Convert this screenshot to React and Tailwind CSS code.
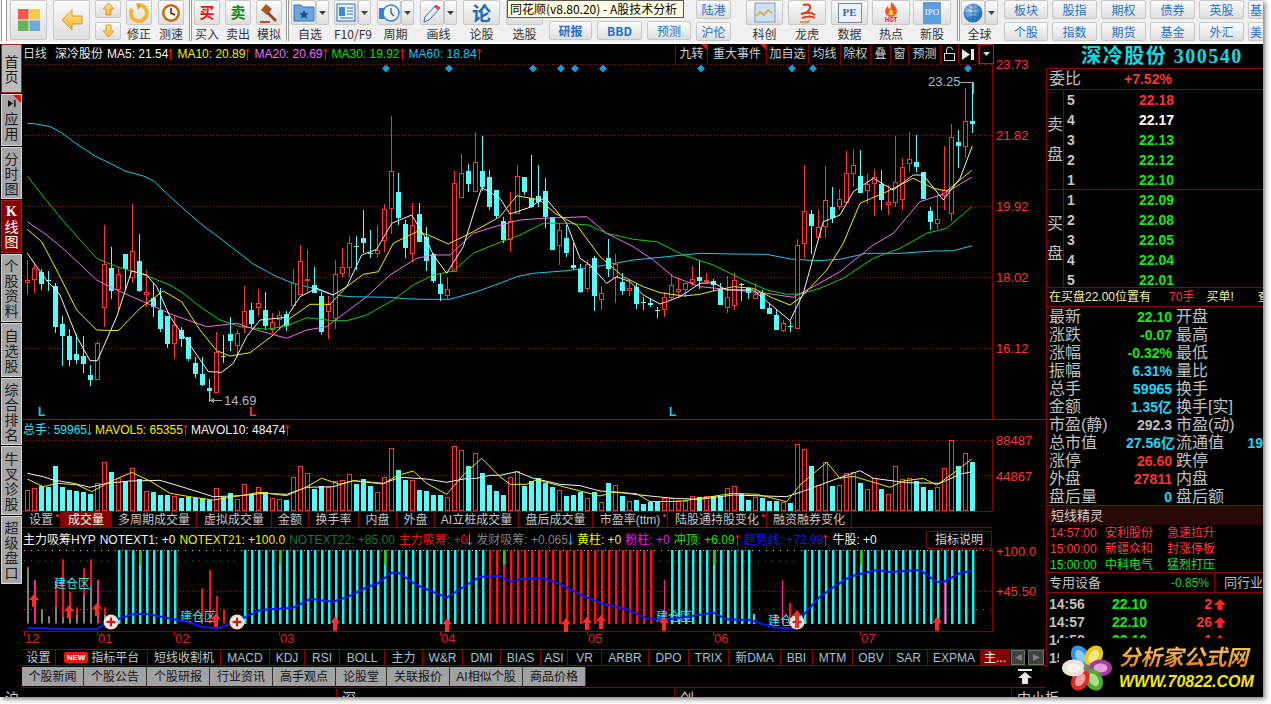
import React from "react";

const X = (i) => Math.round(27.33 + 7 * i);
const pts = (a, ox, oy) => {
  let s = [];
  for (let k = 0; k < a.length; k += 2) s.push(`${(a[k] / 3 + ox).toFixed(1)},${(a[k + 1] / 3 + oy).toFixed(1)}`);
  return s.join(" ");
};
const two = (a, b, oy) => pts(a, 0, oy) + " " + pts(b, 500, oy);

const CANDLES = `r450 555 510 515;r455 548 475 508;c478 540 487 522;c483 542 510 512;c518 670 528 652;c618 768 642 678;c658 768 678 750;c672 762 732 750;c678 788 738 762;c765 828 795 810;r692 808 700 806;r345 652 462 590;c410 568 474 542;r475 600 492 538;c432 540 432 478;r282 520 424 500;c372 545 453 543;r480 590 546 552;c520 620 563 590;c535 665 600 657;c618 715 618 702;r618 748 646 700;c650 710 660 686;c680 752 682 748;c740 805 760 792;c742 828 792 825;c808 875 835 842;r665 845 725 845;c675 758 738 741;c622 722 672 692;r660 740 670 704;r528 668 604 648;c580 650 600 642;r538 618 580 590;c545 660 600 648;r610 668 636 656;r603 660 614 628;c604 662 613 648;r478 584 518 584;r406 552 452 552;r418 545 507 510;c470 550 525 550;c545 675 558 665;r558 688 583 604;r450 658 492 624;r415 500 472 490;r378 500 400 470;c378 480 408 411;c300 430 384 398;c360 445 430 433;r345 445 420 430;r282 425 298 390;r18 372 184 295;c190 345 246 325;c330 445 342 414;r280 455 346 428;c280 395 312 396;c352 482 382 452;c430 518 432 512;c490 572 522 552;r500 568 538 556;r182 485 220 484;r132 265 190 262;c162 245 184 222;r66 245 157 242;c78 242 184 232;c180 300 202 290;c240 325 240 318;c322 400 334 390;r245 425 332 388;r165 310 198 310;c200 255 202 245;c135 295 265 292;c165 290 259 275;c205 355 243 322;c320 420 322 420;r340 465 360 405;c346 440 385 430;c400 480 465 474;c462 548 478 545;r450 545 463 533;c438 602 444 557;r528 600 550 566;c388 500 445 476;r432 578 462 500;c488 555 515 542;r510 558 535 541;c520 596 530 582;c560 600 576 579;c565 592 580 584;c590 624 600 603;r545 620 562 598;r492 570 526 560;r505 565 538 542;r518 560 520 536;r468 528 508 515;c450 537 502 514;r490 520 511 514;c508 542 512 526;c518 585 535 584;r497 608 562 590;r490 600 510 584;c520 572 522 526;c530 568 534 548;r518 568 553 563;c540 597 550 596;c580 611 595 611;c598 660 616 660;r630 665 640 660;c632 665 648 652;r388 654 406 654;r165 444 302 398;c300 432 312 348;r300 384 350 382;r168 384 270 348;c230 340 292 324;r238 300 268 288;r124 276 190 276;r118 230 166 188;c120 250 198 248;r192 282 222 240;r178 318 200 220;c180 300 222 270;r225 315 276 282;r78 290 216 276;r145 300 172 266;r66 185 148 158;c75 186 156 172;c186 268 186 266;c292 360 304 336;r255 358 328 338;r108 300 240 255;r42 334 82 308;c60 175 96 108;r-66 145 34 108;c-84 69 34 42`
  .split(";")
  .map((s) => [s[0], ...s.slice(1).split(" ").map(Number)]);

const VOLS = `225 220 213 215 153 216 225 228 231 237 205 142 171 190 198 160 192 229 231 240 240 244 249 245 250 250 254 220 245 234 252 208 238 216 232 250 253 255 187 154 175 222 213 215 198 196 178 207 192 213 232 187 100 165 195 196 225 228 240 240 247 94 106 153 115 174 210 228 240 187 169 213 198 190 203 216 226 243 240 232 250 232 262 204 211 243 259 255 267 261 258 250 250 256 258 244 246 244 243 244 220 214 238 255 246 249 258 258 262 264 88 103 153 210 142 213 211 175 170 204 223 190 222 238 154 193 190 198 216 225 217 160 76 153 115 141`
  .split(" ")
  .map(Number);

const MA60 = two([82,40,110,42,150,50,185,68,220,95,285,138,330,160,375,183,430,198,460,212,510,260,600,340,680,400,760,462,830,500,880,520,940,535,1000,555,1050,560,1170,562,1210,566,1270,568,1350,568,1430,545,1500,520],[50,500,100,490,200,482,300,468,400,450,500,440,600,430,700,432,800,433,870,447,950,452,1020,448,1100,430,1200,430,1300,423,1360,422,1417,407],110);
const MA30 = two([82,198,130,260,200,345,290,445,350,470,420,490,510,525,550,550,600,590,660,630,720,650,800,658,860,648,920,623,1000,632,1040,632,1100,615,1180,570,1240,525,1300,495,1360,483,1420,430,1500,397],[60,375,130,340,200,340,265,345,320,370,400,388,470,395,550,435,640,465,720,505,800,540,860,553,900,552,960,535,1030,505,1120,445,1200,415,1280,370,1340,355,1415,290],110);
const MA20 = two([82,335,140,375,200,425,290,510,350,540,430,575,520,615,620,650,710,640,770,660,860,685,920,660,980,650,1040,605,1100,560,1170,495,1250,445,1300,435,1350,435,1420,370,1500,345],[60,330,130,325,260,320,320,370,400,410,460,450,520,500,600,530,700,540,800,550,880,562,940,530,1020,485,1120,405,1180,370,1260,275,1330,252,1415,202],110);
const MA10 = two([82,358,125,395,175,490,230,600,290,660,355,662,420,595,490,543,545,575,600,660,650,722,690,738,750,728,820,675,870,625,930,583,990,583,1040,530,1090,493,1135,485,1180,400,1250,365,1285,375,1345,402,1420,365,1500,320],[50,257,120,270,165,310,230,345,300,440,370,500,430,530,480,548,550,558,600,553,640,543,700,530,760,535,820,565,870,585,905,560,980,480,1030,400,1080,280,1160,245,1240,205,1300,235,1340,243,1415,181],110);
const MA5 = two([82,430,135,505,180,555,230,680,270,752,292,752,350,620,395,483,440,495,470,530,510,620,570,705,625,785,665,787,700,760,740,680,780,630,860,622,900,560,950,535,1000,555,1040,530,1085,435,1130,418,1175,340,1235,315,1280,390,1300,435,1340,490,1390,410,1445,232,1500,265],[30,312,90,292,135,262,200,340,240,445,270,465,320,520,350,500,390,515,430,555,480,582,540,560,600,520,640,518,680,540,760,540,820,590,870,632,910,550,970,335,1020,315,1060,245,1120,205,1180,240,1240,195,1270,195,1330,270,1380,205,1417,108],110);
const MAV = two([82,175,130,185,160,195,220,205,270,217,320,205,390,198,480,196,560,220,640,245,720,242,790,235,860,238,920,217,1000,215,1060,197,1150,205,1200,187,1280,192,1340,202,1390,192,1430,190,1470,181,1500,181],[50,170,100,190,180,208,240,212,300,228,360,232,420,240,520,250,600,253,700,240,860,245,920,225,1000,195,1080,167,1120,190,1220,203,1320,205,1380,178,1415,170],415);
const MAV5 = two([82,192,130,215,170,205,230,209,275,230,330,200,395,172,450,198,510,235,580,247,640,255,720,242,780,232,860,242,920,215,965,190,1020,208,1060,197,1150,207,1190,182,1240,168,1280,205,1340,238,1390,180,1445,130,1500,185],[30,208,80,208,110,194,190,215,300,243,340,232,410,236,450,260,540,259,700,235,770,238,860,260,900,210,980,142,1020,190,1060,184,1100,196,1170,217,1210,198,1270,190,1310,210,1360,175,1415,132],415);
const BLUE = two([82,355,120,355,200,358,290,358,310,345,360,325,400,313,440,311,490,322,560,335,610,352,660,353,700,338,740,320,780,300,880,293,930,267,1000,275,1040,262,1100,232,1130,222,1175,188,1195,188,1250,225,1340,263,1400,225,1440,200,1500,198],[30,215,60,208,130,205,180,222,250,258,310,282,380,298,440,325,490,330,560,320,640,308,680,328,750,330,820,352,880,356,910,315,960,260,1000,232,1050,200,1130,180,1170,186,1260,180,1310,215,1330,216,1380,190,1417,182],510);

const RED = "#ff3232";
const CY = "#54fcfc";
const SANS = "font-['Liberation_Sans','Noto_Sans_CJK_SC',sans-serif]";

function Candles() {
  return CANDLES.map(([k, h, l, t, b], i) => {
    const x = X(i);
    const col = k === "r" ? RED : CY;
    const yh = Math.round(110 + h / 3), yl = Math.round(110 + l / 3), yt = Math.round(110 + t / 3), yb = Math.round(110 + b / 3);
    return (
      <g key={i}>
        <rect x={x} y={yh} width="1" height={yl - yh} fill={col} />
        {k === "r" ? (
          <rect x={x - 1.5} y={yt + 0.5} width="4" height={Math.max(yb - yt, 1)} fill="#000" stroke={col} strokeWidth="1" />
        ) : (
          <rect x={x - 2} y={yt} width="5" height={Math.max(yb - yt, 1)} fill={col} />
        )}
      </g>
    );
  });
}

function MainChart() {
  const dia = [386, 449, 533, 561, 575, 603, 701, 792, 813, 968];
  const grid = [64.5, 135.5, 206.5, 277.5, 348.5];
  const labels = [["23.73", 69], ["21.82", 140], ["19.92", 211], ["18.02", 282], ["16.12", 353]];
  return (
    <svg width="1024" height="355" viewBox="22 64 1024 355" className="block overflow-visible">
      {grid.map((y) => (
        <line key={y} x1="24" x2="992" y1={y} y2={y} stroke="#a01010" strokeDasharray="1 2" />
      ))}
      <line x1="992.5" x2="992.5" y1="64" y2="419" stroke="#8b0000" />
      {labels.map(([t, y]) => (
        <text key={t} x="996" y={y} fill={RED} fontSize="13" fontFamily="Liberation Sans">{t}</text>
      ))}
      {dia.map((x) => (
        <path key={x} d={`M${x} 64.5l4 4-4 4-4-4z`} fill="#1a9ad0" />
      ))}
      <polyline points={MA60} fill="none" stroke="#20c8e8" />
      <Candles />
      <polyline points={MA30} fill="none" stroke="#10d010" />
      <polyline points={MA20} fill="none" stroke="#f070f0" />
      <polyline points={MA10} fill="none" stroke="#f0f000" />
      <polyline points={MA5} fill="none" stroke="#f4f4f4" />
      <path d="M210 391v9.5h12M210.500 400.500l3-2v4z" stroke="#a8a8a8" fill="none" />
      <text x="224" y="405" fill="#b0b8c0" fontSize="13" fontFamily="Liberation Sans">14.69</text>
      <path d="M960 82.500h13M973.500 82v12" stroke="#a8a8a8" fill="none" />
      <text x="928" y="86" fill="#b0b8c0" fontSize="13" fontFamily="Liberation Sans">23.25</text>
      <text x="38" y="416" fill="#18c8f0" fontSize="12" fontWeight="bold" fontFamily="Liberation Sans">L</text>
      <text x="249" y="416" fill={RED} fontSize="12" fontWeight="bold" fontFamily="Liberation Sans">L</text>
      <text x="669" y="416" fill="#18c8f0" fontSize="12" fontWeight="bold" fontFamily="Liberation Sans">L</text>
    </svg>
  );
}

function VolChart() {
  return (
    <svg width="1024" height="72" viewBox="22 439 1024 72" className="block overflow-visible">
      {[440.5, 475.5].map((y) => (
        <line key={y} x1="24" x2="992" y1={y} y2={y} stroke="#a01010" strokeDasharray="1 2" />
      ))}
      <line x1="992.5" x2="992.5" y1="439" y2="511" stroke="#8b0000" />
      <text x="996" y="445" fill={RED} fontSize="13" fontFamily="Liberation Sans">88487</text>
      <text x="996" y="481" fill={RED} fontSize="13" fontFamily="Liberation Sans">44867</text>
      {VOLS.map((t, i) => {
        const x = X(i);
        const y = Math.round(415 + t / 3);
        return CANDLES[i][0] === "r" ? (
          <rect key={i} x={x - 1.5} y={y + 0.5} width="4" height={510 - y} fill="#000" stroke={RED} />
        ) : (
          <rect key={i} x={x - 2} y={y} width="5" height={511 - y} fill={CY} />
        );
      })}
      <polyline points={MAV} fill="none" stroke="#f4f4f4" />
      <polyline points={MAV5} fill="none" stroke="#f0f000" />
    </svg>
  );
}

function UpArrow({ x, y1, y2 }) {
  const top = y1, bot = y2;
  return <path d={`M${x} ${top}l5 6h-3v${bot - top - 6}h-4v${-(bot - top - 6)}h-3z`} fill="#ff2a2a" />;
}

function Plus({ x, y }) {
  return (
    <g>
      <circle cx={x} cy={y} r="7.500" fill="#f6dccc" />
      <circle cx={x} cy={y} r="5" fill="#fff" />
      <path d={`M${x - 1.2} ${y - 4.500}h2.400v3.300h3.300v2.400h-3.300v3.300h-2.400v-3.300h-3.300v-2.400h3.300z`} fill="#d01818" />
    </g>
  );
}

function IndChart() {
  const idx = [];
  for (let i = 13; i <= 21; i++) idx.push([i, "c"]);
  for (let i = 31; i <= 65; i++) idx.push([i, "c"]);
  for (let i = 66; i <= 89; i++) idx.push([i, "r"]);
  for (let i = 92; i <= 103; i++) idx.push([i, "c"]);
  for (let i = 111; i <= 135; i++) idx.push([i, "c"]);
  const small = [
    [27, 175, "#808080", 170], [34, 210, "#ff2090", 210], [41, 298, "#808080", 298], [48, 320, "#808080", 318],
    [55, 290, "#808080", 212], [62, 322, "#808080", 148], [69, 322, "#808080", 245], [76, 315, "#808080", 292],
    [83, 255, "#808080", 175], [90, 228, "#808080", 148], [97, 210, "#ff2090", 210], [104, 315, "#808080", 292],
    [201, 330, "#808080", 235], [209, 320, "#ff1010", 180], [216, 330, "#808080", 258], [223, 330, "#ff1010", 298],
  ];
  const months = [["12", 24], ["01", 97], ["02", 174], ["03", 279], ["04", 440], ["05", 587], ["06", 713], ["07", 860]];
  const Y = (z) => 510 + z / 3;
  const arrows = [[34, 252, 290], [69, 285, 325], [97, 278, 318], [216, 310, 350], [335, 320, 362], [447, 325, 366], [566, 325, 366], [587, 320, 360], [601, 315, 357], [664, 320, 362], [937, 320, 362]];
  const zhuz = { fontFamily: "Noto Sans CJK SC", fontSize: 12, fill: "#22e8e8" };
  return (
    <svg width="1024" height="100" viewBox="22 549 1024 100" className="block overflow-visible">
      <line x1="24" x2="992" y1="550.500" y2="550.500" stroke="#f0e000" strokeDasharray="1 6" />
      <line x1="24" x2="992" y1="591.500" y2="591.500" stroke="#a01010" strokeDasharray="1 2" />
      <line x1="24" x2="992" y1="609.500" y2="609.500" stroke="#c04040" strokeDasharray="1 6" />
      <line x1="24" x2="118" y1="561" y2="561" stroke="#109010" strokeDasharray="1 6" />
      <line x1="178" x2="240" y1="561" y2="561" stroke="#109010" strokeDasharray="1 6" />
      <line x1="660" x2="800" y1="561" y2="561" stroke="#109010" strokeDasharray="1 6" />
      <line x1="992.500" x2="992.500" y1="549" y2="632" stroke="#8b0000" />
      <line x1="22" x2="992" y1="631.500" y2="631.500" stroke="#8b0000" />
      {small.map(([x, tz, col, hz], k) => (
        <g key={k}>
          <rect x={x} y={Y(hz)} width="2" height={(340 - hz) / 3} fill={col === "#ff2090" ? col : "#ff1010"} />
          <rect x={x} y={Y(tz)} width="2" height={(340 - tz) / 3} fill={col} />
        </g>
      ))}
      {idx.map(([i, k]) => (
        <rect key={i} x={X(i)} y="550" width="2.500" height="74" fill={k === "c" ? "#18f0f0" : "#ff1010"} />
      ))}
      {[16, 36, 51, 68, 98, 119].map((i) => (
        <rect key={i} x={X(i)} y="550" width="2.500" height="15" fill="#20d020" />
      ))}
      <rect x="753" y="614" width="2" height="10" fill="#18f0f0" />
      <rect x="775" y="614" width="2" height="10" fill="#ff1010" />
      <rect x="782" y="580" width="1" height="44" fill="#ff2090" />
      <rect x="789" y="603" width="2" height="21" fill="#ff1010" />
      <rect x="664" y="580" width="1" height="44" fill="#ff2090" />
      <rect x="944" y="582" width="1" height="42" fill="#ff2090" />
      <rect x="587" y="580" width="1" height="44" fill="#ff2090" />
      <text x="54" y="588" {...zhuz}>建仓区</text>
      <text x="180" y="621" {...zhuz}>建仓区</text>
      <text x="656" y="621" {...zhuz}>建仓区</text>
      <text x="768" y="625" {...zhuz}>建仓区</text>
      <polyline points={BLUE} fill="none" stroke="#0a18f0" strokeWidth="2" />
      {arrows.map(([x, a, b]) => (
        <UpArrow key={x} x={x} y1={Y(a)} y2={Y(b)} />
      ))}
      <Plus x={111} y={622} />
      <Plus x={237} y={622} />
      <Plus x={797} y={622} />
      <UpArrow x={797} y1={610} y2={628} />
      {months.map(([t, x]) => (
        <g key={t}>
          <line x1={x + 0.5} x2={x + 0.5} y1="632" y2="636" stroke="#b01010" />
          <text x={x + 1} y="643" fill="#e02020" fontSize="13" fontFamily="Liberation Sans">{t}</text>
        </g>
      ))}
      <text x="996" y="556" fill={RED} fontSize="13" fontFamily="Liberation Sans">+100.0</text>
      <text x="996" y="596" fill={RED} fontSize="13" fontFamily="Liberation Sans">+45.50</text>
    </svg>
  );
}

/* ---------- toolbar ---------- */
const box = "rounded-[2px] border border-[#c8c8c8] bg-gradient-to-b from-[#fbfbfb] to-[#dedede] flex items-center justify-center";
const lab = "text-[12px] leading-[14px] text-[#333] text-center mt-[2px] whitespace-nowrap";

function Sep({ className }) {
  return <div className={"h-[41px] w-[3px] border-x border-[#9a9a9a] bg-white shrink-0 " + className} />;
}
function Tool({ className, label, children, drop }) {
  return (
    <div className={"shrink-0 " + className}>
      <div className="flex h-[25px]">
        <div className={box + " flex-1 h-full"}>{children}</div>
        {drop && (
          <div className={box + " w-[13px] h-full"}>
            <svg width="7" height="4"><path d="M0 0h7L3.500 4z" fill="#444" /></svg>
          </div>
        )}
      </div>
      <div className={lab}>{label}</div>
    </div>
  );
}
function Tall({ className, children }) {
  return <div className={box + " shrink-0 h-[40px] " + className}>{children}</div>;
}
function Small({ className, children }) {
  return <div className={box + " h-[19px] text-[12px] font-bold text-[#1c70c8] whitespace-nowrap " + className}>{children}</div>;
}
const arrowGrad = (
  <defs>
    <linearGradient id="ag" x1="0" y1="0" x2="0" y2="1">
      <stop offset="0" stopColor="#ffe488" />
      <stop offset="1" stopColor="#f5b330" />
    </linearGradient>
  </defs>
);
function Toolbar() {
  return (
    <div className="relative flex h-[42px] bg-[#f0f0f0] overflow-hidden items-start shrink-0">
      <div className="ml-[1px] w-[6px] h-[41px] border-x border-[#9a9a9a] bg-white shrink-0" />
      <Tall className="ml-[3px] w-[37px]">
        <svg width="24" height="24">
          <rect x="1" y="1" width="10.500" height="10.500" fill="#ef5a50" />
          <rect x="12.500" y="1" width="10.500" height="10.500" fill="#f6cb46" />
          <rect x="1" y="12.500" width="10.500" height="10.500" fill="#69b25c" />
          <rect x="12.500" y="12.500" width="10.500" height="10.500" fill="#6fa8dc" />
        </svg>
      </Tall>
      <Tall className="ml-[6px] w-[37px]">
        <svg width="22" height="22">{arrowGrad}<path d="M1 11L11 1v6h10v8H11v6z" fill="url(#ag)" stroke="#d79a2c" /></svg>
      </Tall>
      <div className="ml-[5px] w-[26px] shrink-0 flex flex-col gap-[4px]">
        <div className={box + " h-[18px]"}><svg width="13" height="14"><path d="M6.500 1L12 7H9v6H4V7H1z" fill="url(#ag)" stroke="#d79a2c" /></svg></div>
        <div className={box + " h-[18px]"}><svg width="13" height="14"><path d="M6.500 13L12 7H9V1H4v6H1z" fill="url(#ag)" stroke="#d79a2c" /></svg></div>
      </div>
      <Tool className="ml-[5px] w-[26px]" label="修正">
        <svg width="20" height="21"><path d="M10 3a8 8 0 1 1-7 4" fill="none" stroke="#f0b838" strokeWidth="4" /><path d="M7 1l6 2-4 5z" fill="#e8a020" /></svg>
      </Tool>
      <Tool className="ml-[6px] w-[26px]" label="测速">
        <svg width="20" height="20"><circle cx="10" cy="10" r="9" fill="#b4701c" /><circle cx="10" cy="10" r="6.500" fill="#fdf8ea" /><path d="M10 5v5l4 2" stroke="#402010" strokeWidth="1.500" fill="none" /></svg>
      </Tool>
      <Sep className="ml-[5px]" />
      <Tool className="ml-[2px] w-[26px]" label="买入"><span className="text-[15px] text-[#f01010] font-bold">买</span></Tool>
      <Tool className="ml-[5px] w-[26px]" label="卖出"><span className="text-[15px] text-[#108a10] font-bold">卖</span></Tool>
      <Tool className="ml-[5px] w-[26px]" label="模拟">
        <svg width="22" height="22"><path d="M3 8l5-6 6 5-5 6z" fill="#a85a24" /><path d="M10 9l9 9-2 2-9-9z" fill="#8a4a1c" /><rect x="2" y="19" width="10" height="2" fill="#c05020" /></svg>
      </Tool>
      <Sep className="ml-[4px]" />
      <Tool className="ml-[2px] w-[38px]" label="自选" drop>
        <svg width="22" height="19"><path d="M1 2h7l2 2h11v14H1z" fill="#6aa6dc" stroke="#3a78b8" /><path d="M11 7l1.500 3 3.300.300-2.500 2.200.800 3.300L11 14l-3.100 1.800.800-3.300L6.200 10.300 9.500 10z" fill="#1c4c90" /></svg>
      </Tool>
      <Tool className="ml-[5px] w-[37px]" label="F10/F9" drop>
        <svg width="20" height="19"><rect x="1" y="1" width="18" height="17" fill="#eaf2fa" stroke="#2c6cb0" /><rect x="3" y="4" width="6" height="9" fill="#3a8ad8" /><path d="M11 5h6M11 8h6M11 11h6M4 15h13" stroke="#2c6cb0" /></svg>
      </Tool>
      <Tool className="ml-[6px] w-[37px]" label="周期" drop>
        <svg width="22" height="20"><rect x="1" y="5" width="5" height="11" fill="#3a80c8" /><circle cx="13" cy="10" r="8" fill="#eef5fb" stroke="#3a80c8" strokeWidth="1.500" /><path d="M13 5v5l3 3" stroke="#305070" fill="none" strokeWidth="1.200" /></svg>
      </Tool>
      <Tool className="ml-[6px] w-[37px]" label="画线" drop>
        <svg width="20" height="20"><path d="M3 14L14 2l4 3L7 17l-5 2z" fill="#e8f0f8" stroke="#2c6cb0" /><path d="M14 2l4 3-2 2-4-3z" fill="#e04848" /></svg>
      </Tool>
      <Tool className="ml-[6px] w-[37px]" label="论股"><span className="text-[19px] leading-none font-bold text-[#1668b8]">论</span></Tool>
      <Tool className="ml-[6px] w-[37px]" label="选股">
        <svg width="18" height="18"><circle cx="8" cy="8" r="5" fill="none" stroke="#2c6cb0" strokeWidth="2" /></svg>
      </Tool>
      <div className="ml-[6px] w-[142px] shrink-0 flex gap-[5px] pt-[21px]">
        <Small className="w-[43px]">研报</Small>
        <Small className="w-[45px]">BBD</Small>
        <Small className="w-[44px] font-normal">预测</Small>
      </div>
      <div className="ml-[5px] w-[35px] shrink-0 flex flex-col gap-[3px]">
        <Small className="font-normal">陆港</Small>
        <Small className="font-normal">沪伦</Small>
      </div>
      <Tool className="ml-[15px] w-[37px]" label="科创">
        <svg width="26" height="22"><rect x="3" y="1" width="20" height="19" fill="#cfe0f2" stroke="#7a9cc4" /><path d="M4 14l4-4 4 3 4-5 4 3" fill="none" stroke="#e8a020" strokeWidth="1.500" /></svg>
      </Tool>
      <Tool className="ml-[5px] w-[38px]" label="龙虎">
        <svg width="24" height="22" fill="none" stroke="#e03818" strokeWidth="2"><path d="M8 3q8-2 7 3t-9 6q10-3 14 1M7 16q8-3 13 0" /><path d="M5 20q6 1 10-1" stroke="#f09028" /></svg>
      </Tool>
      <Tool className="ml-[5px] w-[37px]" label="数据">
        <div className="w-[24px] h-[20px] bg-[#eef3f8] border border-[#6a8aae] flex items-center justify-center text-[11px] font-bold text-[#3a6a9a] font-['Liberation_Serif',serif]">PE</div>
      </Tool>
      <Tool className="ml-[4px] w-[38px]" label="热点">
        <div className="flex flex-col items-center">
          <svg width="16" height="15"><path d="M8 0q6 5 6 9a6 6 0 0 1-12 0q0-3 3-5 0 3 2 3 1-3 1-7z" fill="#f05a18" /><path d="M8 7q3 3 2 6H6q-1-3 2-6z" fill="#fcd040" /></svg>
          <span className="text-[6px] leading-[6px] font-bold text-[#d81818]">HOT</span>
        </div>
      </Tool>
      <Tool className="ml-[3px] w-[38px]" label="新股">
        <div className="w-[18px] h-[22px] bg-[#5aa0e0] flex items-center justify-center text-[9px] text-white font-['Liberation_Serif',serif]">IPO</div>
      </Tool>
      <Sep className="ml-[6px]" />
      <Tool className="ml-[1px] w-[37px]" label="全球" drop>
        <svg width="20" height="20"><defs><radialGradient id="gb" cx=".4" cy=".35"><stop offset="0" stopColor="#cfe6f8" /><stop offset="1" stopColor="#2c78c0" /></radialGradient></defs><circle cx="10" cy="10" r="9.500" fill="url(#gb)" /><path d="M1 10h18M10 1v18M4 4q6 5 12 0M4 16q6-5 12 0" stroke="#1c60a8" fill="none" strokeWidth=".6" /></svg>
      </Tool>
      <div className="ml-[6px] grid grid-cols-[44px_45px_45px_45px_45px_16px] grid-rows-[19px_19px] gap-x-[4px] gap-y-[3px] shrink-0 font-normal">
        {["板块", "股指", "期权", "债券", "英股", "基", "个股", "指数", "期货", "基金", "外汇", "美"].map((t) => (
          <Small key={t} className="font-normal overflow-hidden">{t}</Small>
        ))}
      </div>
      <div className="absolute left-[507px] top-0 w-[177px] h-[18px] bg-[#ffffe1] border border-[#555] text-[12px] leading-[15px] text-black px-[2px] whitespace-nowrap overflow-hidden">
        同花顺(v8.80.20) - A股技术分析
      </div>
    </div>
  );
}

/* ---------- sidebar ---------- */
function SideTab({ chars, h, tone, mark }) {
  const tones = {
    gray: "bg-[#a6a6a6] text-[#1c1c1c] border-[#d8d8d8]",
    first: "bg-[#bcbcbc] text-[#1c1c1c] border-[#b02020]",
    red: "bg-[#850000] text-white border-[#a02020]",
  };
  return (
    <div className={"relative w-[21px] border flex flex-col items-center justify-center shrink-0 " + h + " " + tones[tone]}>
      {mark && (
        <>
          <svg className="absolute right-0 top-0" width="8" height="8"><path d="M0 0h8v8z" fill="#f01010" /></svg>
          <svg width="10" height="9" className="mb-[3px]"><path d="M1 1l5 3.500L1 8zM7 1h1.500v7H7z" fill="#111" /></svg>
        </>
      )}
      {chars.split("").map((c, i) => (
        <span key={i} className={"text-[14px] leading-[15px] " + (c === "K" ? "font-bold font-['Liberation_Serif',serif]" : "")}>{c}</span>
      ))}
    </div>
  );
}
function Sidebar() {
  return (
    <div className="w-[22px] flex flex-col shrink-0 pl-[1px] gap-[1px]">
      <SideTab chars="首页" h="h-[49px]" tone="first" />
      <SideTab chars="应用" h="h-[52px]" tone="gray" mark />
      <SideTab chars="分时图" h="h-[52px]" tone="gray" />
      <SideTab chars="K线图" h="h-[53px]" tone="red" />
      <SideTab chars="个股资料" h="h-[68px]" tone="gray" />
      <SideTab chars="自选股" h="h-[54px]" tone="gray" />
      <SideTab chars="综合排名" h="h-[67px]" tone="gray" />
      <SideTab chars="牛叉诊股" h="h-[69px]" tone="gray" />
      <SideTab chars="超级盘口" h="h-[68px]" tone="gray" />
    </div>
  );
}

/* ---------- center rows ---------- */
function Tab({ w, children, active, dot, className = "" }) {
  return (
    <div className={"relative shrink-0 flex items-center justify-center border-r border-[#8b0000] whitespace-nowrap " + w + " " + (active ? "bg-[#850000] text-white " : "text-[#c8c8c8] ") + className}>
      {children}
      {dot && <span className="absolute right-[1px] top-[2px] w-[3px] h-[3px] rounded-full bg-[#ff2020]" />}
    </div>
  );
}
function HeadBtn({ w, children, mark }) {
  return (
    <div className={"relative shrink-0 h-full flex items-center justify-center border-r border-[#8b0000] text-[12px] text-[#d0d0d0] whitespace-nowrap " + w}>
      {children}
      {mark && <svg className="absolute right-0 top-0" width="6" height="6"><path d="M0 0h6v6z" fill="#f01010" /></svg>}
    </div>
  );
}
const Up = () => (
  <svg width="5" height="12" className="inline-block align-[-2px]"><path d="M2.500 12V1M.5 4l2-3 2 3" fill="none" stroke="#f01010" /></svg>
);
const Down = () => (
  <svg width="5" height="12" className="inline-block align-[-2px]"><path d="M2.500 0v11M.5 8l2 3 2-3" fill="none" stroke="#10a0e0" /></svg>
);

function Center() {
  return (
    <div className={"w-[1024px] flex flex-col shrink-0 text-[12px] " + SANS}>
      <div className="flex h-[20px] items-center justify-between pl-[1px] w-[972px]">
        <div className="flex gap-[4px] whitespace-nowrap text-[12px] leading-[20px]">
          <span className="text-[#d8d8d8] mr-[4px]">日线</span>
          <span className="text-[#f0f0f0]">深冷股份</span>
          <span className="text-[#f4f4f4]">MA5: 21.54<Up /></span>
          <span className="text-[#f0f000]">MA10: 20.89<Up /></span>
          <span className="text-[#f070f0]">MA20: 20.69<Up /></span>
          <span className="text-[#00e000]">MA30: 19.92<Up /></span>
          <span className="text-[#10c8f0]">MA60: 18.84<Up /></span>
        </div>
        <div className="flex h-[20px] border-l border-[#8b0000]">
          <HeadBtn w="w-[32px]" mark>九转</HeadBtn>
          <HeadBtn w="w-[59px]" mark>重大事件</HeadBtn>
          <HeadBtn w="w-[42px]">加自选</HeadBtn>
          <HeadBtn w="w-[32px]">均线</HeadBtn>
          <HeadBtn w="w-[30px]">除权</HeadBtn>
          <HeadBtn w="w-[20px]">叠</HeadBtn>
          <HeadBtn w="w-[18px]">窗</HeadBtn>
          <HeadBtn w="w-[32px]">预测</HeadBtn>
          <HeadBtn w="w-[18px]">
            <svg width="13" height="16" fill="none" stroke="#d8d8d8"><rect x="1.500" y="7.500" width="10" height="7" /><path d="M3.500 7V4a3 3 0 0 1 6 0" /></svg>
          </HeadBtn>
          <HeadBtn w="w-[20px]">
            <svg width="13" height="11"><path d="M0 0l8 5.500L0 11z M9 0h3v11H9z" fill="#e8e8e8" /></svg>
          </HeadBtn>
          <div className="w-[15px] h-full flex items-center justify-center border border-[#d01010]">
            <svg width="7" height="4"><path d="M0 0h7L3.500 4z" fill="#d8d8d8" /></svg>
          </div>
        </div>
      </div>
      <MainChart />
      <div className="flex h-[20px] items-center pl-[1px] gap-[3px] border-t border-[#a01010] whitespace-nowrap leading-[20px]">
        <span className="text-[#30e0f0]">总手: 59965<Down /></span>
        <span className="text-[#f0f000]">MAVOL5: 65355<Up /></span>
        <span className="text-[#f4f4f4]">MAVOL10: 48474<Up /></span>
      </div>
      <VolChart />
      <div className="flex h-[17px] border-t border-b border-[#8b0000] text-[12px] w-[970px]">
        <Tab w="w-[39px]" dot>设置</Tab>
        <Tab w="w-[51px]" active>成交量</Tab>
        <Tab w="w-[85px]">多周期成交量</Tab>
        <Tab w="w-[75px]">虚拟成交量</Tab>
        <Tab w="w-[37px]">金额</Tab>
        <Tab w="w-[50px]">换手率</Tab>
        <Tab w="w-[38px]">内盘</Tab>
        <Tab w="w-[38px]">外盘</Tab>
        <Tab w="w-[84px]">AI立桩成交量</Tab>
        <Tab w="w-[74px]">盘后成交量</Tab>
        <Tab w="w-[75px]" dot>市盈率(ttm)</Tab>
        <Tab w="w-[99px]" dot>陆股通持股变化</Tab>
        <Tab w="w-[85px]">融资融券变化</Tab>
      </div>
      <div className="flex h-[21px] w-[970px] items-end justify-between pl-[1px] whitespace-nowrap">
        <div className="flex gap-[4px] leading-[17px]">
          <span className="text-[#f4f4f4]">主力吸筹HYP</span>
          <span className="text-[#f4f4f4]">NOTEXT1: +0</span>
          <span className="text-[#f0f000]">NOTEXT21: +100.0</span>
          <span className="text-[#0c7a3a]">NOTEXT22: +85.00</span>
          <span className="text-[#f01010]">主力吸筹: +0<Down /></span>
          <span className="text-[#808080]">发财吸筹: +0.065<Down /></span>
          <span className="text-[#f0f000]">黄柱: +0</span>
          <span className="text-[#f010f0]">粉柱: +0</span>
          <span className="text-[#10e010]">冲顶: +6.09<Up /></span>
          <span className="text-[#1818f0]">趋势线: +72.98<Up /></span>
          <span className="text-[#f4f4f4]">牛股: +0</span>
        </div>
        <div className="w-[66px] h-[18px] border border-[#6a1010] flex items-center justify-center text-[12px] text-[#d8d8d8]">指标说明</div>
      </div>
      <IndChart />
      <div className="flex h-[17px] border-t border-b border-[#8b0000] text-[12px]">
        <Tab w="w-[34px]">设置</Tab>
        <Tab w="w-[92px]">
          <span className="mr-[3px] px-[3px] bg-[#f01010] text-white text-[8px] font-bold leading-[11px] rounded-[2px]">NEW</span>指标平台
        </Tab>
        <Tab w="w-[73px]">短线收割机</Tab>
        {[["MACD", "w-[49px]"], ["KDJ", "w-[35px]"], ["RSI", "w-[35px]"], ["BOLL", "w-[45px]"], ["主力", "w-[38px]"], ["W&R", "w-[40px]"], ["DMI", "w-[38px]"], ["BIAS", "w-[40px]"], ["ASI", "w-[27px]"], ["VR", "w-[34px]"], ["ARBR", "w-[47px]"], ["DPO", "w-[40px]"], ["TRIX", "w-[40px]"], ["新DMA", "w-[52px]"], ["BBI", "w-[32px]"], ["MTM", "w-[40px]"], ["OBV", "w-[37px]"], ["SAR", "w-[38px]"], ["EXPMA", "w-[53px]"]].map(([t, w]) => (
          <Tab key={t} w={w}><span className="text-[#a8c0d8]">{t}</span></Tab>
        ))}
        <Tab w="w-[29px]" active>主...</Tab>
        <div className="w-[14px] ml-[1px] bg-[#404040] border border-[#707070] flex items-center justify-center">
          <svg width="7" height="7"><path d="M7 0v7L0 3.500z" fill="#808080" /></svg>
        </div>
        <div className="w-[16px] ml-[3px] bg-[#404040] border border-[#707070] flex items-center justify-center">
          <svg width="7" height="7"><path d="M0 0v7l7-3.500z" fill="#808080" /></svg>
        </div>
      </div>
      <div className="flex h-[22px] pt-[1px] border-b border-[#8b0000]">
        {[["个股新闻", "w-[62px]"], ["个股公告", "w-[63px]"], ["个股研报", "w-[63px]"], ["行业资讯", "w-[63px]"], ["高手观点", "w-[63px]"], ["论股堂", "w-[51px]"], ["关联报价", "w-[63px]"], ["AI相似个股", "w-[73px]"], ["商品价格", "w-[63px]"]].map(([t, w]) => (
          <div key={t} className={"h-[19px] shrink-0 flex items-center justify-center bg-[#a2a2a2] text-[#111] border-r border-[#333] whitespace-nowrap " + w}>{t}</div>
        ))}
        <div className="ml-auto mr-[12px] self-center">
          <svg width="18" height="16"><rect x="2" y="0" width="14" height="2" fill="#e8e8e8" /><path d="M9 3l7 6h-4v6H6V9H2z" fill="#e8e8e8" /></svg>
        </div>
      </div>
    </div>
  );
}

/* ---------- right panel ---------- */
const g = "text-[#14e814]";
function Quote({ n, p, c }) {
  return (
    <div className="flex h-[20px] items-center">
      <span className="w-[18px] pl-[3px] text-[14px] font-bold text-[#c8c8c8]">{n}</span>
      <span className={"ml-[57px] text-[14px] font-bold " + c}>{p}</span>
    </div>
  );
}
function Stat({ a, v, c, b, r, rc }) {
  return (
    <div className="flex h-[18px] items-center whitespace-nowrap">
      <span className="w-[80px] text-[16px] text-[#c0c0c0] shrink-0 leading-[18px] overflow-visible">{a}</span>
      <span className={"w-[46px] -ml-[3px] text-right text-[14px] font-bold shrink-0 " + c}>{v}</span>
      <span className="ml-[4px] text-[16px] text-[#c0c0c0] leading-[18px]">{b}</span>
      {r && <span className={"ml-auto text-[14px] font-bold " + rc}>{r}</span>}
    </div>
  );
}
function Right() {
  return (
    <div className={"relative w-[217px] shrink-0 overflow-hidden " + SANS}>
      <div className="h-[24px] flex items-center justify-center text-[20px] font-bold tracking-[1.5px] text-[#10d8e0] font-['Liberation_Serif','Noto_Sans_CJK_SC',serif] pl-[15px] whitespace-nowrap">
        深冷股份 300540
      </div>
      <div className="border-l border-t border-[#8b0000]">
        <div className="flex h-[21px] items-center border-b border-[#8b0000]">
          <span className="w-[50px] pl-[2px] text-[16px] text-[#c0c0c0] whitespace-nowrap">委比</span>
          <span className="ml-[27px] text-[14px] font-bold text-[#ff3232]">+7.52%</span>
        </div>
        <div className="flex border-b border-[#8b0000] h-[100px]">
          <div className="w-[17px] border-r border-[#8b0000] flex flex-col justify-center items-center gap-[12px] text-[16px] leading-[18px] text-[#c0c0c0] shrink-0"><span>卖</span><span>盘</span></div>
          <div className="flex-1">
            <Quote n="5" p="22.18" c="text-[#ff3232]" />
            <Quote n="4" p="22.17" c="text-white" />
            <Quote n="3" p="22.13" c={g} />
            <Quote n="2" p="22.12" c={g} />
            <Quote n="1" p="22.10" c={g} />
          </div>
        </div>
        <div className="flex border-b border-[#8b0000] h-[98px]">
          <div className="w-[17px] border-r border-[#8b0000] flex flex-col justify-center items-center gap-[12px] text-[16px] leading-[18px] text-[#c0c0c0] shrink-0"><span>买</span><span>盘</span></div>
          <div className="flex-1">
            <Quote n="1" p="22.09" c={g} />
            <Quote n="2" p="22.08" c={g} />
            <Quote n="3" p="22.05" c={g} />
            <Quote n="4" p="22.04" c={g} />
            <Quote n="5" p="22.01" c={g} />
          </div>
        </div>
        <div className="flex h-[19px] items-center border-b border-[#8b0000] pl-[2px] text-[12px] text-[#f0f0a0] whitespace-nowrap">
          <span>在买盘22.00位置有</span>
          <span className="ml-[18px] text-[#ff3232]">70手</span>
          <span className="ml-[12px]">买单!</span>
          <span className="ml-[24px]">查</span>
        </div>
        <div className="pl-[2px] pt-[1px] border-b border-[#8b0000] h-[199px] pb-[1px]">
          <Stat a="最新" v="22.10" c={g} b="开盘" />
          <Stat a="涨跌" v="-0.07" c={g} b="最高" />
          <Stat a="涨幅" v="-0.32%" c={g} b="最低" />
          <Stat a="振幅" v="6.31%" c="text-[#18d8f8]" b="量比" />
          <Stat a="总手" v="59965" c="text-[#18d8f8]" b="换手" />
          <Stat a="金额" v="1.35亿" c="text-[#18d8f8]" b="换手[实]" />
          <Stat a="市盈(静)" v="292.3" c="text-[#c0c0c0]" b="市盈(动)" />
          <Stat a="总市值" v="27.56亿" c="text-[#18d8f8]" b="流通值" r="19" rc="text-[#18d8f8]" />
          <Stat a="涨停" v="26.60" c="text-[#ff3232]" b="跌停" />
          <Stat a="外盘" v="27811" c="text-[#ff3232]" b="内盘" />
          <Stat a="盘后量" v="0" c="text-[#18d8f8]" b="盘后额" />
        </div>
        <div className="h-[19px] bg-[#2a0808] flex items-center pl-[4px] text-[13px] text-[#d0d0d0] whitespace-nowrap">短线精灵</div>
        <div className="h-[48px] pt-[0px] border-b border-[#8b0000] text-[12px] flex flex-col">
          {[["14:57:00", "安利股份", "急速拉升", "text-[#ff3a3a]"], ["15:00:00", "新疆众和", "封涨停板", "text-[#ff3a3a]"], ["15:00:00", "中科电气", "猛烈打压", "text-[#18e818]"]].map(([t, a, b, c]) => (
            <div key={a} className={"flex h-[16px] items-center whitespace-nowrap " + c}>
              <span className="w-[58px] pl-[3px]">{t}</span>
              <span className="w-[62px] text-[12px]">{a}</span>
              <span>{b}</span>
            </div>
          ))}
        </div>
        <div className="flex h-[20px] items-center border-b border-[#8b0000] whitespace-nowrap">
          <span className="w-[70px] pl-[2px] text-[13px] text-[#c0c0c0]">专用设备</span>
          <span className="w-[109px] pr-[5px] text-right text-[12px] text-[#18d818]">-0.85%</span>
          <span className="border-l border-[#8b0000] h-full flex items-center pl-[9px] text-[13px] text-[#c0c0c0]">同行业</span>
        </div>
        <div className="pt-[2px]">
          {[["14:56", "22.10", "2"], ["14:57", "22.10", "26"], ["14:58", "22.10", "1"], ["15:00", "22.10", "5"]].map(([t, p, n]) => (
            <div key={t} className="flex h-[18px] items-center font-bold text-[14px]">
              <span className="w-[65px] pl-[2px] text-[#c0c0c0]">{t}</span>
              <span className={"w-[45px] " + g}>{p}</span>
              <span className="w-[55px] text-right text-[#ff3232]">{n}</span>
              <svg width="12" height="11" className="ml-[2px]"><path d="M6 0l6 6H8.500v5h-5V6H0z" fill="#ff2020" /></svg>
            </div>
          ))}
        </div>
      </div>
    </div>
  );
}

function Logo() {
  const colors = ["#3a90e0", "#e8c820", "#a03aa0", "#50a830", "#e02828", "#e8e4d8"];
  const inner = ["#8cc8f0", "#f8e880", "#e8a0d8", "#a8e088", "#f0a0a0", "#f8f4ec"];
  return (
    <div className="absolute left-[1059px] top-[638px] w-[204px] h-[59px] bg-black flex items-center">
      <svg width="56" height="50" viewBox="-28 -25 56 50" className="shrink-0">
        {colors.map((c, i) => (
          <g key={i} transform={`rotate(${-30 + i * 60})`}>
            <ellipse cx="0" cy="-13.500" rx="8.500" ry="11.500" fill={c} />
            <ellipse cx="0" cy="-13.500" rx="4.500" ry="7" fill={inner[i]} />
          </g>
        ))}
        <circle r="3.500" fill="#7a7a60" />
      </svg>
      <div className="ml-[4px] flex flex-col italic font-bold whitespace-nowrap">
        <span className="text-[21.500px] leading-[26px] font-['Noto_Sans_CJK_SC',sans-serif] bg-gradient-to-b from-[#f8d060] to-[#e07818] bg-clip-text text-transparent">分析家公式网</span>
        <span className="text-[16px] leading-[20px] mt-[3px] text-[#f5e800] font-['Liberation_Sans',sans-serif]">WWW.70822.COM</span>
      </div>
    </div>
  );
}

export default function App() {
  return (
    <div className="w-[1271px] h-[704px] bg-white overflow-hidden font-['Noto_Sans_CJK_SC',sans-serif]">
      <div className="relative w-[1263px] h-[697px] bg-black flex flex-col shadow-[2px_2px_5px_#777]">
        <Toolbar />
        <div className="h-[2px] bg-white shrink-0" />
        <div className="flex h-[645px] shrink-0">
          <Sidebar />
          <Center />
          <Right />
        </div>
        <div className="flex h-[8px] overflow-hidden text-[14px] text-[#d0d0d0] leading-[16px]">
          <div className="w-[337px] pl-[5px] border-r border-[#8b0000]">沪</div>
          <div className="w-[338px] pl-[5px] border-r border-[#8b0000]">深</div>
          <div className="w-[337px] pl-[5px] border-r border-[#8b0000]">创</div>
          <div className="pl-[5px]">中小板指</div>
        </div>
        <Logo />
      </div>
    </div>
  );
}
